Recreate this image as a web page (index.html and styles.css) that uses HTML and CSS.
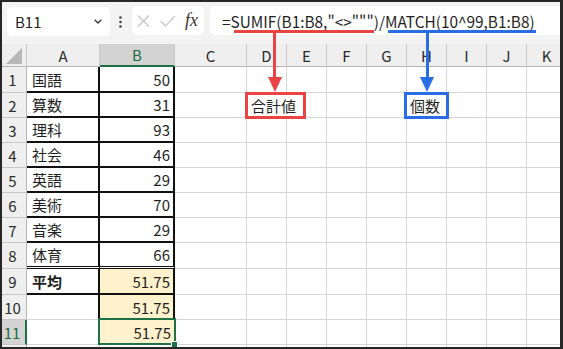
FILE: index.html
```html
<!DOCTYPE html>
<html lang="ja">
<head>
    <meta charset="UTF-8">
    <meta name="viewport" content="width=device-width, initial-scale=1.0">
    <title>SUMIF / MATCH</title>
    <link rel="stylesheet" href="styles.css">
</head>
<body>

    <div class="window">

        <!-- Formula bar -->
        <div class="toolbar">
            <div class="namebox">
                <span>B11</span>
                <svg width="8" height="5" viewBox="0 0 8 5"><path d="M0.7 0.7L4 4L7.3 0.7" fill="none" stroke="#333" stroke-width="1.3"/></svg>
            </div>
            <svg class="dots" width="3" height="12" viewBox="0 0 3 12">
                <circle cx="1.5" cy="1.5" r="1.3" fill="#444"/>
                <circle cx="1.5" cy="6" r="1.3" fill="#444"/>
                <circle cx="1.5" cy="10.5" r="1.3" fill="#444"/>
            </svg>
            <div class="fxbox">
                <svg width="13" height="12" viewBox="0 0 13 12"><path d="M1 0.5L12 11.5M12 0.5L1 11.5" stroke="#c4c4c4" stroke-width="1.2"/></svg>
                <svg width="16" height="12" viewBox="0 0 16 12"><path d="M0.8 6L5.5 10.8L15.2 0.8" fill="none" stroke="#c4c4c4" stroke-width="1.2"/></svg>
                <span class="fx">fx</span>
            </div>
            <div class="formula">=SUMIF(B1:B8,"&lt;&gt;""")/MATCH(10^99,B1:B8)</div>
        </div>

        <!-- Sheet -->
        <div class="sheet">
            <div class="row head">
                <div class="corner"><svg width="17" height="16" viewBox="0 0 17 16"><path d="M16 0V16H0Z" fill="#b8b8b8"/></svg></div>
                <div class="ch">A</div><div class="ch sel">B</div><div class="ch">C</div><div class="ch">D</div><div class="ch">E</div><div class="ch">F</div><div class="ch">G</div><div class="ch">H</div><div class="ch">I</div><div class="ch">J</div><div class="ch">K</div>
            </div>
            <div class="row tall">
                <div class="rh">1</div><div class="c box">国語</div><div class="c box num">50</div>
                <div class="c"></div><div class="c"></div><div class="c"></div><div class="c"></div><div class="c"></div><div class="c"></div><div class="c"></div><div class="c"></div><div class="c"></div>
            </div>
            <div class="row">
                <div class="rh">2</div><div class="c box">算数</div><div class="c box num">31</div>
                <div class="c"></div><div class="c"></div><div class="c"></div><div class="c"></div><div class="c"></div><div class="c"></div><div class="c"></div><div class="c"></div><div class="c"></div>
            </div>
            <div class="row">
                <div class="rh">3</div><div class="c box">理科</div><div class="c box num">93</div>
                <div class="c"></div><div class="c"></div><div class="c"></div><div class="c"></div><div class="c"></div><div class="c"></div><div class="c"></div><div class="c"></div><div class="c"></div>
            </div>
            <div class="row">
                <div class="rh">4</div><div class="c box">社会</div><div class="c box num">46</div>
                <div class="c"></div><div class="c"></div><div class="c"></div><div class="c"></div><div class="c"></div><div class="c"></div><div class="c"></div><div class="c"></div><div class="c"></div>
            </div>
            <div class="row">
                <div class="rh">5</div><div class="c box">英語</div><div class="c box num">29</div>
                <div class="c"></div><div class="c"></div><div class="c"></div><div class="c"></div><div class="c"></div><div class="c"></div><div class="c"></div><div class="c"></div><div class="c"></div>
            </div>
            <div class="row">
                <div class="rh">6</div><div class="c box">美術</div><div class="c box num">70</div>
                <div class="c"></div><div class="c"></div><div class="c"></div><div class="c"></div><div class="c"></div><div class="c"></div><div class="c"></div><div class="c"></div><div class="c"></div>
            </div>
            <div class="row">
                <div class="rh">7</div><div class="c box">音楽</div><div class="c box num">29</div>
                <div class="c"></div><div class="c"></div><div class="c"></div><div class="c"></div><div class="c"></div><div class="c"></div><div class="c"></div><div class="c"></div><div class="c"></div>
            </div>
            <div class="row tall">
                <div class="rh">8</div><div class="c box dbl">体育</div><div class="c box dbl num">66</div>
                <div class="c"></div><div class="c"></div><div class="c"></div><div class="c"></div><div class="c"></div><div class="c"></div><div class="c"></div><div class="c"></div><div class="c"></div>
            </div>
            <div class="row tall">
                <div class="rh">9</div><div class="c box bold">平均</div><div class="c box num fill">51.75</div>
                <div class="c"></div><div class="c"></div><div class="c"></div><div class="c"></div><div class="c"></div><div class="c"></div><div class="c"></div><div class="c"></div><div class="c"></div>
            </div>
            <div class="row">
                <div class="rh">10</div><div class="c side"></div><div class="c side num fill">51.75</div>
                <div class="c"></div><div class="c"></div><div class="c"></div><div class="c"></div><div class="c"></div><div class="c"></div><div class="c"></div><div class="c"></div><div class="c"></div>
            </div>
            <div class="row">
                <div class="rh sel">11</div><div class="c"></div><div class="c num fill active">51.75</div>
                <div class="c"></div><div class="c"></div><div class="c"></div><div class="c"></div><div class="c"></div><div class="c"></div><div class="c"></div><div class="c"></div><div class="c"></div>
            </div>
            <div class="row">
                <div class="rh"></div><div class="c"></div><div class="c"></div>
                <div class="c"></div><div class="c"></div><div class="c"></div><div class="c"></div><div class="c"></div><div class="c"></div><div class="c"></div><div class="c"></div><div class="c"></div>
            </div>
        </div>

        <!-- Callouts -->
        <div class="bar red-bg sum-bar"></div>
        <div class="stem red-bg sum-stem"></div>
        <div class="head-arrow red-arrow sum-arrow"></div>
        <div class="label red-label sum-label">合計値</div>

        <div class="bar blue-bg count-bar"></div>
        <div class="stem blue-bg count-stem"></div>
        <div class="head-arrow blue-arrow count-arrow"></div>
        <div class="label blue-label count-label">個数</div>

    </div>

</body>
</html>
```

FILE: styles.css
```css
body {
    margin: 0;
    background-color: #262626;
    font-family: "Noto Sans CJK JP", "Noto Sans", sans-serif;
    color: #1f1f1f;
}
.window {
    position: relative;
    margin: 2px 3px 0 2px;
    height: 345px;
    overflow: hidden;
    background: white;
}

/* formula bar */
.toolbar {
    height: 42px;
    background-color: #f3f3f3;
    display: flex;
    align-items: flex-start;
    padding-left: 5px;
}
.namebox {
    margin-top: 5px;
    width: 103px;
    height: 29px;
    box-sizing: border-box;
    padding: 0 8px;
    background: white;
    border-radius: 5px;
    display: flex;
    align-items: center;
    justify-content: space-between;
    font-size: 15px;
}
.dots {
    margin: 14px 0 0 9px;
}
.fxbox {
    margin: 4px 0 0 10px;
    width: 72px;
    height: 29px;
    box-sizing: border-box;
    padding: 0 4px 0 5px;
    background: white;
    border-radius: 5px;
    display: flex;
    align-items: center;
    gap: 10px;
}
.fx {
    font-family: "Liberation Serif", serif;
    font-style: italic;
    font-size: 18px;
    color: #333;
    margin-left: -1px;
}
.formula {
    flex: 1;
    margin: 4px 0 0 6px;
    height: 29px;
    padding-left: 12px;
    background: white;
    border-radius: 5px 0 0 5px;
    display: flex;
    align-items: center;
    font-size: 15.4px;
    white-space: nowrap;
}

/* sheet grid */
.row {
    display: grid;
    grid-template-columns: 25px 73px 75px 72px repeat(8, 40px);
    height: 25px;
}
.row.tall {
    height: 26px;
}
.row.head {
    height: 23px;
}
.row > div {
    box-sizing: border-box;
    display: flex;
    align-items: center;
    font-size: 15px;
    white-space: nowrap;
}
.corner, .ch {
    background-color: #efefef;
    border-right: 1px solid #c8c8c8;
    border-bottom: 1px solid #b5b5b5;
}
.corner {
    justify-content: flex-end;
    align-items: flex-end !important;
    padding: 0 3px 2px 0;
}
.ch {
    justify-content: center;
    color: #2b2b2b;
}
.ch.sel {
    background-color: #d3d3d3;
    color: #1d6b40;
    border-bottom: 2px solid #1e7145;
}
.rh {
    background-color: #efefef;
    border-right: 1px solid #b5b5b5;
    border-bottom: 1px solid #c8c8c8;
    justify-content: center;
    padding-right: 3px;
    color: #2b2b2b;
}
.rh.sel {
    background-color: #d3d3d3;
    color: #1d6b40;
    border-right: 2px solid #1e7145;
}
.c {
    border-right: 1px solid #d6d6d6;
    border-bottom: 1px solid #d6d6d6;
    padding: 0 3px 0 5px;
}
.c.box {
    border-right: 2px solid #111;
    border-bottom: 2px solid #111;
}
.c.dbl {
    border-bottom: 3px double #111;
}
.c.side {
    border-right: 2px solid #111;
}
.num {
    justify-content: flex-end;
}
.bold {
    font-weight: bold;
}
.fill {
    background-color: #fff2cc;
}
.active {
    position: relative;
}
.active::after {
    content: "";
    position: absolute;
    left: -2px;
    top: -2px;
    right: -2px;
    bottom: -1px;
    border: 2px solid #1e7145;
}
.active::before {
    content: "";
    position: absolute;
    right: -4px;
    bottom: -4px;
    width: 5px;
    height: 5px;
    background-color: #1e7145;
    border: 1px solid white;
    z-index: 1;
}

/* callouts */
.red-bg {
    background-color: #e94343;
}
.blue-bg {
    background-color: #2a6ee6;
}
.bar {
    position: absolute;
    top: 28px;
    height: 3px;
}
.stem {
    position: absolute;
    top: 30px;
    width: 3px;
    height: 47px;
}
.head-arrow {
    position: absolute;
    top: 75px;
    width: 0;
    height: 0;
    border-left: 7px solid transparent;
    border-right: 7px solid transparent;
    border-top: 15px solid;
}
.red-arrow {
    border-top-color: #e94343;
}
.blue-arrow {
    border-top-color: #2a6ee6;
}
.label {
    position: absolute;
    top: 90px;
    height: 27px;
    box-sizing: border-box;
    background: white;
    font-size: 15px;
    display: flex;
    align-items: center;
    padding-left: 3px;
}
.red-label {
    border: 3px solid #e94343;
}
.blue-label {
    border: 3px solid #2a6ee6;
}
.sum-bar {
    left: 232px;
    width: 140px;
}
.sum-stem {
    left: 271px;
}
.sum-arrow {
    left: 266px;
}
.sum-label {
    left: 243px;
    width: 61px;
}
.count-bar {
    left: 386px;
    width: 148px;
}
.count-stem {
    left: 424px;
}
.count-arrow {
    left: 418px;
}
.count-label {
    left: 402px;
    width: 45px;
}
```
